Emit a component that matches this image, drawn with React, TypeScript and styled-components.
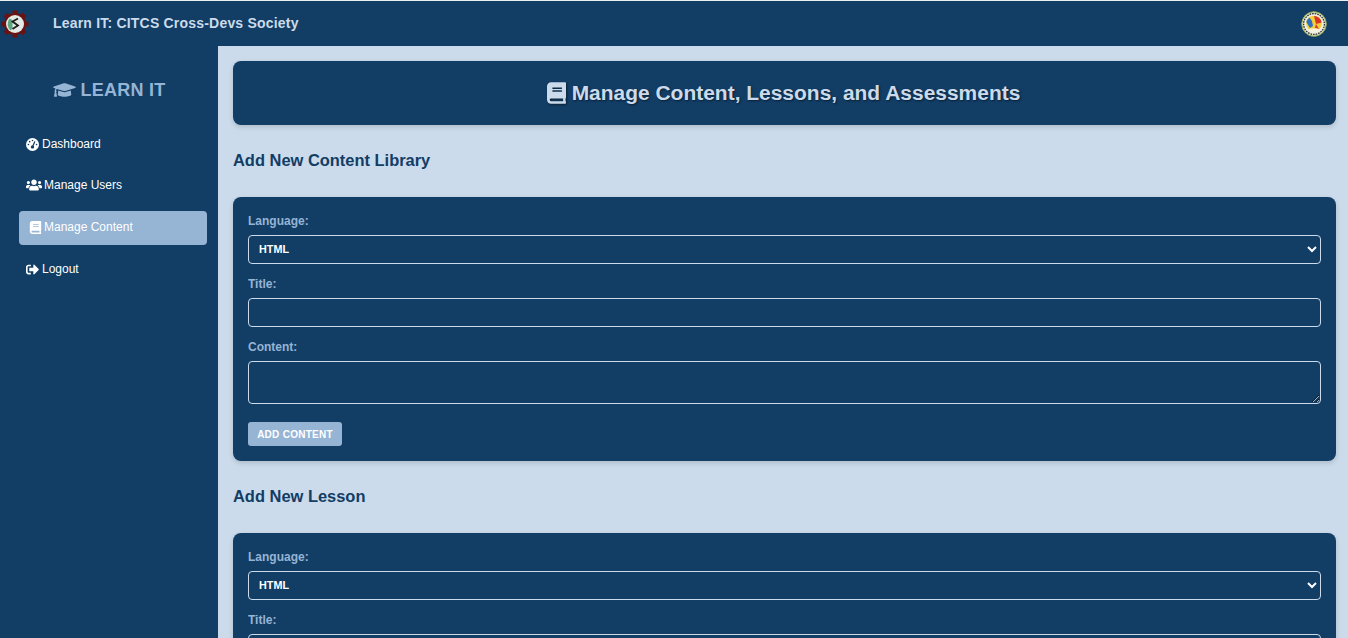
import React from "react";
import styled, { createGlobalStyle } from "styled-components";
import { FaBook, FaGraduationCap, FaSignOutAlt, FaUsers } from "react-icons/fa";
import { FaGaugeHigh } from "react-icons/fa6";

const navy = "#123d65";
const pale = "#cbdbeb";
const mid = "#96b4d4";

const Global = createGlobalStyle`
  html, body { margin: 0; padding: 0; height: 638px; overflow: hidden; background: ${pale}; }
  * { box-sizing: border-box; }
  body { font-family: "Liberation Sans", Arial, sans-serif; }
`;

const Page = styled.div`
  height: 638px;
  overflow: hidden;
  display: flex;
  flex-direction: column;
  border-top: 1px solid #e9eef0;
`;

const TopBar = styled.header`
  height: 45px;
  flex: none;
  background: ${navy};
  display: flex;
  align-items: center;
  padding: 0 21px 0 1px;
`;

const TopTitle = styled.div`
  margin-left: 24px;
  padding-bottom: 2px;
  font-size: 14px;
  font-weight: 700;
  letter-spacing: 0.2px;
  color: ${pale};
  flex: 1;
`;

const Body = styled.div`
  flex: 1;
  display: flex;
  min-height: 0;
`;

const Sidebar = styled.aside`
  width: 218px;
  flex: none;
  background: ${navy};
  padding: 32px 11px 0 19px;
`;

const Brand = styled.div`
  display: flex;
  justify-content: center;
  align-items: center;
  gap: 5px;
  height: 24px;
  margin: 0 8px 26px 0;
  color: ${mid};
  font-size: 18px;
  letter-spacing: 0.25px;
  font-weight: 700;
  svg { width: 23px; height: 18px; }
`;

const NavList = styled.nav`
  display: flex;
  flex-direction: column;
`;

const NavItem = styled.div<{ $active?: boolean; $icon?: number; $gap?: number }>`
  height: 34px;
  margin-bottom: 8px;
  padding: 0 0 2px ${(p) => (p.$active ? 10 : 7)}px;
  display: flex;
  align-items: center;
  gap: ${(p) => p.$gap ?? 3}px;
  color: #fff;
  font-size: 12px;
  border-radius: 4px;
  background: ${(p) => (p.$active ? mid : "transparent")};
  svg { flex: none; font-size: ${(p) => p.$icon ?? 13}px; }
  &:first-child { margin-bottom: 7px; }
`;

const Main = styled.main`
  flex: 1;
  min-width: 0;
  padding: 15px 12px 0 15px;
`;

const Banner = styled.div`
  height: 64px;
  background: ${navy};
  border-radius: 8px;
  box-shadow: 0 2px 5px rgba(0, 0, 0, 0.15);
  display: flex;
  justify-content: center;
  align-items: center;
  gap: 6px;
  padding-right: 2px;
  color: ${pale};
  font-size: 20.96px;
  font-weight: 700;
  text-shadow: 1px 1px 2px rgba(0, 0, 0, 0.5);
  svg { width: 19px; height: 22px; filter: drop-shadow(1px 1px 1px rgba(0, 0, 0, 0.5)); }
`;

const SectionTitle = styled.h2`
  margin: 0;
  height: 72px;
  padding-top: 26px;
  color: ${navy};
  font-size: 16.45px;
  line-height: 19px;
  font-weight: 700;
`;

const Card = styled.section`
  background: ${navy};
  border-radius: 8px;
  box-shadow: 0 2px 5px rgba(0, 0, 0, 0.15);
  padding: 15px;
`;

const Label = styled.label`
  display: block;
  height: 23px;
  padding-top: 2px;
  color: ${mid};
  font-size: 12px;
  line-height: 14px;
  font-weight: 700;
`;

const Select = styled.select`
  display: block;
  width: 100%;
  height: 29px;
  margin-bottom: 11px;
  padding: 0 6px 2px;
  background: ${navy};
  border: 1px solid ${pale};
  border-radius: 4px;
  color: #fff;
  font-family: inherit;
  font-size: 10.8px;
  font-weight: 700;
`;

const Input = styled.input`
  display: block;
  width: 100%;
  height: 29px;
  margin: 0 0 11px;
  background: ${navy};
  border: 1px solid ${pale};
  border-radius: 4px;
`;

const TextArea = styled.textarea`
  display: block;
  width: 100%;
  height: 43px;
  margin: 0 0 18px;
  background: ${navy};
  border: 1px solid ${pale};
  border-radius: 4px;
`;

const Button = styled.button`
  display: block;
  width: 94px;
  height: 24px;
  padding: 0;
  border: 0;
  border-radius: 3px;
  background: ${mid};
  color: #fff;
  font-family: inherit;
  font-size: 10px;
  font-weight: 700;
  letter-spacing: 0.27px;
  text-transform: uppercase;
`;

const GearLogo = () => (
  <svg width="28" height="28" viewBox="0 0 28 28" aria-hidden="true">
    {[0, 45, 90, 135, 180, 225, 270, 315].map((a) => (
      <rect key={a} x="11.5" y="0.5" width="5" height="5" fill="#6a1212" transform={`rotate(${a} 14 14)`} />
    ))}
    <circle cx="14" cy="14" r="11" fill="#6a1212" />
    <circle cx="14" cy="14" r="9" fill="#e4ebe6" />
    <path d="M8.5 8.5a9 9 0 0 0 1 12l2-2V10z" fill="#5fa67e" />
    <path d="M17 8.5l-5.5 3 5.5 4-5.5 3.5" fill="none" stroke="#1d1d1d" strokeWidth="1.8" />
  </svg>
);

const SealLogo = () => (
  <svg width="26" height="26" viewBox="0 0 26 26" aria-hidden="true">
    <circle cx="13" cy="13" r="12.3" fill="#dfe6b8" stroke="#8fa35a" strokeWidth="1" />
    <circle cx="13" cy="13" r="10.4" fill="#f0efe0" stroke="#2b2f3a" strokeWidth="1.3" strokeDasharray="1.6 1" />
    <circle cx="13" cy="12.5" r="7.8" fill="#f3cf35" />
    <path d="M13 5a7.8 7.8 0 0 1 7.6 6.5L15 13l-1-4z" fill="#d8352a" />
    <path d="M5.4 11a7.8 7.8 0 0 1 3-4.6L11 10l1 5-3 2z" fill="#2f70c4" />
    <path d="M15 13l3 5-4-1z" fill="#d8352a" />
    <path d="M7 18.5a8.5 8.5 0 0 0 12 0l-3-1H10z" fill="#f7f3df" />
  </svg>
);

const FormCard = ({ full }: { full: boolean }) => (
  <Card>
    <Label>Language:</Label>
    <Select defaultValue="HTML">
      <option>HTML</option>
      <option>CSS</option>
      <option>JavaScript</option>
    </Select>
    <Label>Title:</Label>
    <Input type="text" />
    {full && (
      <>
        <Label>Content:</Label>
        <TextArea />
        <Button>Add Content</Button>
      </>
    )}
  </Card>
);

export default function App() {
  return (
    <Page>
      <Global />
      <TopBar>
        <GearLogo />
        <TopTitle>Learn IT: CITCS Cross-Devs Society</TopTitle>
        <SealLogo />
      </TopBar>
      <Body>
        <Sidebar>
          <Brand>
            <FaGraduationCap />
            LEARN IT
          </Brand>
          <NavList>
            <NavItem><FaGaugeHigh />Dashboard</NavItem>
            <NavItem $icon={16} $gap={2}><FaUsers />Manage Users</NavItem>
            <NavItem $active $gap={2}><FaBook />Manage Content</NavItem>
            <NavItem><FaSignOutAlt />Logout</NavItem>
          </NavList>
        </Sidebar>
        <Main>
          <Banner>
            <FaBook />
            Manage Content, Lessons, and Assessments
          </Banner>
          <SectionTitle>Add New Content Library</SectionTitle>
          <FormCard full />
          <SectionTitle>Add New Lesson</SectionTitle>
          <FormCard full={false} />
        </Main>
      </Body>
    </Page>
  );
}
